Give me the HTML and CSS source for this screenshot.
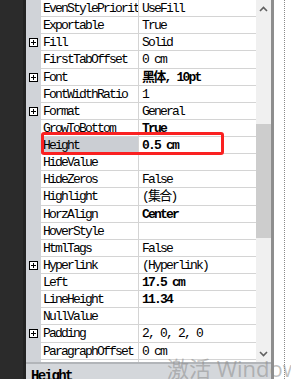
FILE: index.html
```html
<!DOCTYPE html>
<html>
<head>
<meta charset="utf-8">
<link rel="stylesheet" href="styles.css">
</head>
<body>
<div class="app">
  <div class="shade"></div>
  <div class="panel">
    <div class="grid">
      <div class="rows">
        <div class="row"><span class="gut"></span><span class="name">EvenStylePriority</span><span class="val">UseFill</span></div>
        <div class="row"><span class="gut"></span><span class="name">Exportable</span><span class="val">True</span></div>
        <div class="row"><span class="gut"><i class="plus"></i></span><span class="name">Fill</span><span class="val">Solid</span></div>
        <div class="row"><span class="gut"></span><span class="name">FirstTabOffset</span><span class="val">0 cm</span></div>
        <div class="row"><span class="gut"><i class="plus"></i></span><span class="name">Font</span><span class="val b">黑体, 10pt</span></div>
        <div class="row"><span class="gut"></span><span class="name">FontWidthRatio</span><span class="val">1</span></div>
        <div class="row"><span class="gut"><i class="plus"></i></span><span class="name">Format</span><span class="val">General</span></div>
        <div class="row"><span class="gut"></span><span class="name">GrowToBottom</span><span class="val b">True</span></div>
        <div class="row sel"><span class="gut"></span><span class="name">Height</span><span class="val b">0.5 cm</span></div>
        <div class="row"><span class="gut"></span><span class="name">HideValue</span><span class="val"></span></div>
        <div class="row"><span class="gut"></span><span class="name">HideZeros</span><span class="val">False</span></div>
        <div class="row"><span class="gut"></span><span class="name">Highlight</span><span class="val">(集合)</span></div>
        <div class="row"><span class="gut"></span><span class="name">HorzAlign</span><span class="val b">Center</span></div>
        <div class="row"><span class="gut"></span><span class="name">HoverStyle</span><span class="val"></span></div>
        <div class="row"><span class="gut"></span><span class="name">HtmlTags</span><span class="val">False</span></div>
        <div class="row"><span class="gut"><i class="plus"></i></span><span class="name">Hyperlink</span><span class="val">(Hyperlink)</span></div>
        <div class="row"><span class="gut"></span><span class="name">Left</span><span class="val b">17.5 cm</span></div>
        <div class="row"><span class="gut"></span><span class="name">LineHeight</span><span class="val b">11.34</span></div>
        <div class="row"><span class="gut"></span><span class="name">NullValue</span><span class="val"></span></div>
        <div class="row"><span class="gut"><i class="plus"></i></span><span class="name">Padding</span><span class="val">2, 0, 2, 0</span></div>
        <div class="row"><span class="gut"></span><span class="name">ParagraphOffset</span><span class="val">0 cm</span></div>
        <div class="row"><span class="gut"></span><span class="name">ShrinkToFit</span><span class="val">False</span></div>
      </div>
      <div class="vscroll">
        <div class="sbtn"><svg width="9" height="6" viewBox="0 0 9 6"><polyline points="1,5 4.5,1.5 8,5" fill="none" stroke="#606060" stroke-width="1.6"/></svg></div>
        <div class="thumb"></div>
        <div class="track"></div>
        <div class="sbtn"><svg width="9" height="6" viewBox="0 0 9 6"><polyline points="1,1 4.5,4.5 8,1" fill="none" stroke="#606060" stroke-width="1.6"/></svg></div>
      </div>
    </div>
    <div class="desc">Height</div>
  </div>
  <div class="edge"></div>
  <div class="outer"><div class="dots"></div></div>
  <div class="highlight"></div>
  <div class="watermark">激活 Windows</div>
</div>
</body>
</html>
```
FILE: styles.css
```css
html, body {
  margin: 0;
  padding: 0;
  background: #ffffff;
}
.app {
  position: relative;
  display: flex;
  width: 291px;
  height: 379px;
  overflow: hidden;
  font-family: "Liberation Mono", "Noto Sans CJK SC", monospace;
  font-size: 13px;
  color: #000;
}
.shade {
  width: 23px;
  flex: none;
  background: #2b2b2b;
  border-right: 3px solid #232323;
}
.panel {
  width: 245px;
  flex: none;
  display: flex;
  flex-direction: column;
  background: #d0d3d8;
}
.grid {
  height: 362px;
  flex: none;
  display: flex;
  overflow: hidden;
}
.rows {
  width: 230px;
  flex: none;
  display: flex;
  flex-direction: column;
}
.row {
  height: 17.125px;
  flex: none;
  display: flex;
}
.gut {
  width: 15px;
  flex: none;
  background: #d0d3d8;
  display: flex;
  align-items: center;
  padding-left: 3px;
  box-sizing: border-box;
}
.plus {
  display: block;
  position: relative;
  width: 9px;
  height: 9px;
  box-sizing: border-box;
  border: 1px solid #000;
  background: #fff;
}
.plus::before, .plus::after {
  content: "";
  position: absolute;
  background: #000;
}
.plus::before {
  left: 1px;
  top: 3px;
  width: 5px;
  height: 1px;
}
.plus::after {
  left: 3px;
  top: 1px;
  width: 1px;
  height: 5px;
}
.name, .val {
  box-sizing: border-box;
  border-bottom: 1px solid #d4d4d4;
  background: #fff;
  white-space: nowrap;
  overflow: hidden;
  line-height: 16px;
  padding-top: 1px;
  letter-spacing: -1.8px;
}
.name {
  width: 98px;
  flex: none;
  padding-left: 2px;
  border-right: 1px solid #d4d4d4;
}
.val {
  flex: 1;
  padding-left: 3px;
}
.b {
  font-weight: bold;
}
.sel .name {
  background: #cbced3;
}
.vscroll {
  width: 15px;
  flex: none;
  display: flex;
  flex-direction: column;
  background: #f0f0f0;
}
.sbtn {
  height: 17px;
  flex: none;
  display: flex;
  align-items: center;
  justify-content: center;
}
.thumb {
  margin-top: 107px;
  height: 114px;
  flex: none;
  background: #cdcdcd;
}
.track {
  flex: 1;
}
.desc {
  flex: 1;
  border-top: 2px solid #b2b5b9;
  background: #d4d7db;
  padding-left: 5px;
  padding-top: 4px;
  font-size: 14px;
  font-weight: bold;
  letter-spacing: -1.6px;
  line-height: 16px;
}
.edge {
  width: 3px;
  flex: none;
  background: #8e8e8e;
}
.outer {
  flex: 1;
  background: #fff;
  padding-left: 10px;
}
.dots {
  width: 0;
  height: 100%;
  border-left: 1px dotted #8a8a8a;
}
.highlight {
  position: absolute;
  left: 41px;
  top: 132px;
  width: 183px;
  height: 23px;
  box-sizing: border-box;
  border: 3px solid #fa2121;
  border-radius: 3px;
}
.watermark {
  position: absolute;
  left: 167px;
  top: 357px;
  font-family: "Open Sans", "Noto Sans CJK SC", sans-serif;
  font-size: 22px;
  line-height: 22px;
  white-space: nowrap;
  color: rgba(140, 140, 140, 0.55);
}
```
